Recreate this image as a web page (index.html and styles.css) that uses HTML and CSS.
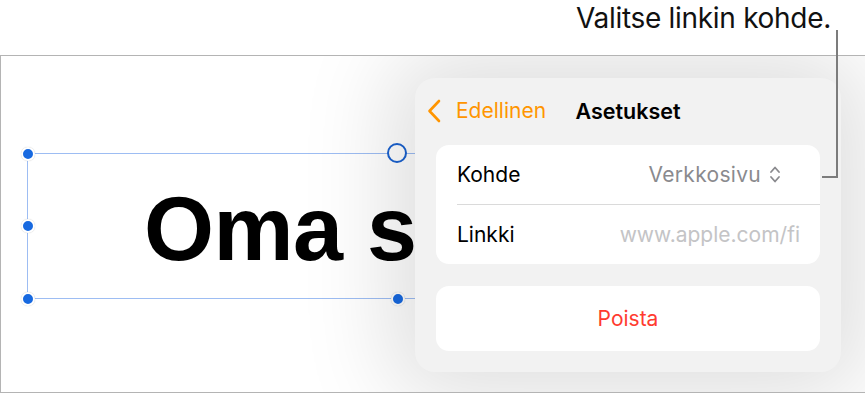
FILE: index.html
```html
<!DOCTYPE html>
<html lang="fi">
<head>
<meta charset="utf-8">
<title>Linkin asetukset</title>
<link rel="stylesheet" href="styles.css">
</head>
<body>
<div class="page">
  <header class="callout">
    <span class="callout-text">Valitse linkin kohde.</span>
  </header>
  <div class="canvas">
    <div class="textbox">
      <span class="title">Oma s</span>
      <span class="handle h-tl"></span>
      <span class="handle h-ml"></span>
      <span class="handle h-bl"></span>
      <span class="handle h-bm"></span>
      <span class="ring"></span>
    </div>
    <div class="popover">
      <div class="pop-header">
        <div class="back">
          <svg class="chev" width="14" height="24" viewBox="0 0 14 24"><path d="M12 2 L2.5 12 L12 22" fill="none" stroke="#ff9500" stroke-width="2.6" stroke-linecap="round" stroke-linejoin="round"/></svg>
          <span class="back-label">Edellinen</span>
        </div>
        <div class="pop-title">Asetukset</div>
        <div class="spacer"></div>
      </div>
      <div class="group">
        <div class="row">
          <span class="label">Kohde</span>
          <span class="value">Verkkosivu
            <svg class="stepper" width="12" height="19" viewBox="0 0 12 19"><path d="M2 7 L6 2.5 L10 7 M2 12 L6 16.5 L10 12" fill="none" stroke="#8a8a8e" stroke-width="1.8" stroke-linecap="round" stroke-linejoin="round"/></svg>
          </span>
        </div>
        <div class="sep"></div>
        <div class="row">
          <span class="label">Linkki</span>
          <span class="url">www.apple.com/fi</span>
        </div>
      </div>
      <div class="group action">
        <span class="delete">Poista</span>
      </div>
    </div>
  </div>
  <div class="leader"></div>
</div>
</body>
</html>
```
FILE: styles.css
```css
html, body {
  margin: 0;
  padding: 0;
  background: #ffffff;
  overflow: hidden;
}
.page {
  position: relative;
  width: 865px;
  height: 394px;
  font-family: "Inter", "Noto Sans", sans-serif;
}
.callout {
  height: 55px;
  display: flex;
  justify-content: flex-end;
  align-items: flex-start;
  padding-right: 34px;
  box-sizing: border-box;
}
.callout-text {
  font-size: 28px;
  color: #111;
  line-height: 34px;
  margin-top: 1px;
  letter-spacing: -0.3px;
  white-space: nowrap;
}
.canvas {
  position: relative;
  height: 338px;
  box-sizing: border-box;
  border-top: 1px solid #b4b4b4;
  border-left: 1px solid #b4b4b4;
  border-bottom: 1px solid #b4b4b4;
  overflow: hidden;
  padding: 97px 0 0 26px;
  background: #ffffff;
}
.textbox {
  position: relative;
  width: 741px;
  height: 146px;
  box-sizing: border-box;
  border: 1px solid #9dbdf3;
  display: flex;
  align-items: center;
  padding: 6px 0 0 116px;
}
.title {
  font-family: "Liberation Sans", Arial, sans-serif;
  font-weight: 700;
  font-size: 90px;
  color: #000;
  white-space: nowrap;
  letter-spacing: -0.5px;
}
.handle {
  position: absolute;
  width: 10px;
  height: 10px;
  border-radius: 50%;
  background: #1769e0;
  border: 2px solid #fff;
  box-shadow: 0 0 1px rgba(0,0,0,0.25);
}
.h-tl { left: -7px; top: -7px; }
.h-ml { left: -7px; top: 65px; }
.h-bl { left: -7px; bottom: -8px; }
.h-bm { left: 363px; bottom: -8px; }
.ring {
  position: absolute;
  left: 359px;
  top: -11px;
  width: 16px;
  height: 16px;
  border-radius: 50%;
  border: 2.5px solid #1a62d0;
  background: #fff;
}
.popover {
  position: absolute;
  left: 414px;
  top: 22px;
  width: 426px;
  height: 294px;
  background: #f2f2f2;
  border-radius: 20px;
  box-shadow: 0 0 90px 25px rgba(0,0,0,0.13);
  box-sizing: border-box;
  padding: 0 21px;
}
.pop-header {
  height: 67px;
  display: grid;
  grid-template-columns: 1fr auto 1fr;
  align-items: center;
  margin: 0 -9px;
  padding-bottom: 2px;
  box-sizing: border-box;
}
.back {
  display: flex;
  align-items: center;
  gap: 15px;
}
.chev { display: block; }
.back-label {
  color: #ff9500;
  font-size: 21px;
}
.pop-title {
  font-size: 21.5px;
  font-weight: 600;
  color: #000;
}
.group {
  background: #ffffff;
  border-radius: 13px;
}
.row {
  height: 59px;
  display: flex;
  align-items: center;
  justify-content: space-between;
  padding: 0 20px 0 21px;
}
.label {
  font-size: 21px;
  color: #000;
}
.value {
  display: flex;
  align-items: center;
  gap: 8px;
  font-size: 21px;
  letter-spacing: 0.3px;
  color: #8a8a8e;
  padding-right: 19px;
}
.stepper { display: block; }
.url {
  font-size: 21px;
  color: #c4c4c6;
}
.sep {
  height: 1px;
  background: #dadada;
  margin-left: 21px;
}
.action {
  margin-top: 22px;
  height: 65px;
  display: flex;
  align-items: center;
  justify-content: center;
}
.delete {
  font-size: 21px;
  color: #ff3b30;
}
.leader {
  position: absolute;
  left: 822px;
  top: 30px;
  width: 14px;
  height: 146px;
  border-right: 2px solid #7c7c7c;
  border-bottom: 2px solid #7c7c7c;
}
```
